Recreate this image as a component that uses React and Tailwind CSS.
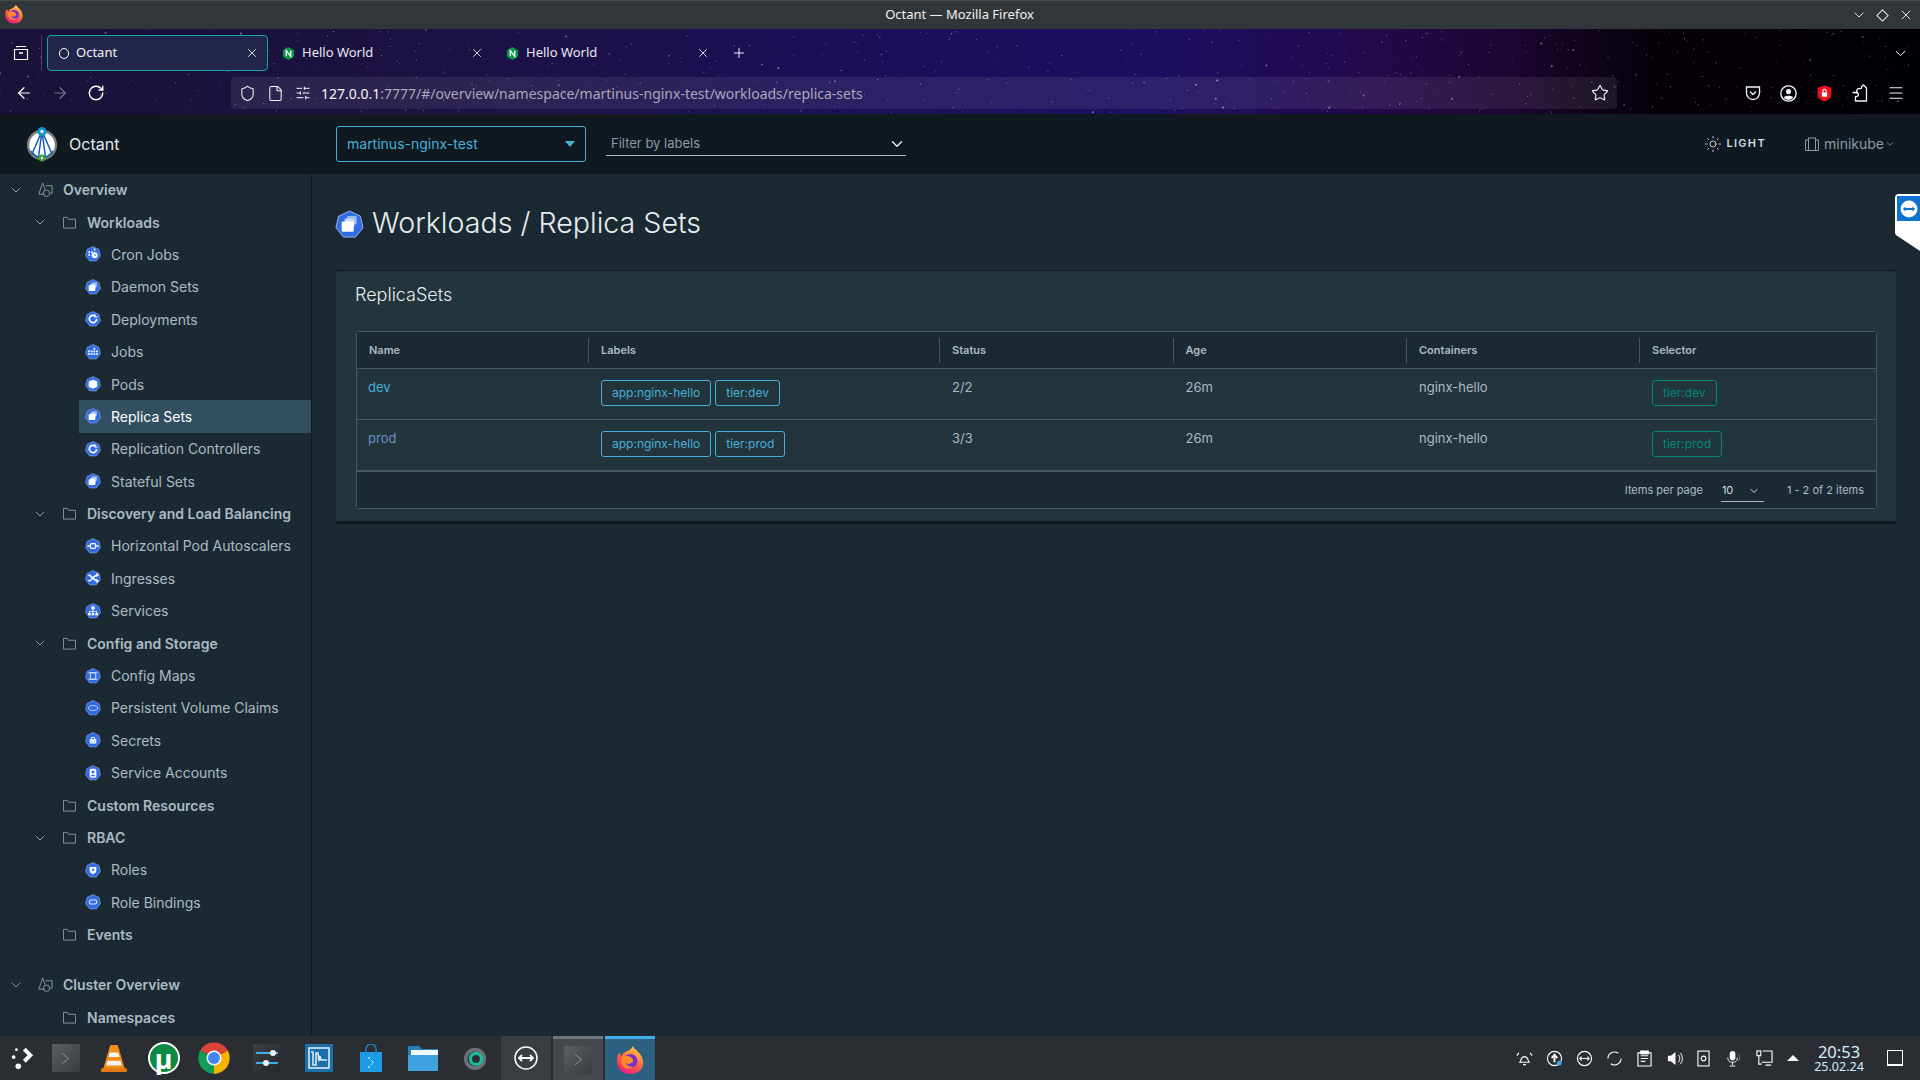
import React from "react";
import {
  ArrowLeft,
  ArrowRight,
  ChevronDown,
  File,
  Menu,
  Plus,
  RotateCw,
  Shield,
  SlidersHorizontal,
  Star,
  Sun,
  X,
} from "lucide-react";

const UI = "font-['Noto_Sans',sans-serif]";
const APP = "font-['Inter',sans-serif]";

// fixed star field for the firefox theme
const stars = [];
let seed = 7;
const rnd = () => {
  seed = (seed * 16807) % 2147483647;
  return seed / 2147483647;
};
for (let i = 0; i < 520; i++) {
  stars.push({ x: rnd() * 1920, y: rnd() * 85, r: rnd() < 0.1 ? 1 : 0.55, o: 0.15 + rnd() * 0.45 });
}

const Heptagon = ({ children, className = "w-4 h-4" }) => (
  <svg viewBox="0 0 24 24" className={className}>
    <path
      d="M12 .8 21 5.1 23.2 14.6 17 22.4H7L.8 14.6 3 5.1Z"
      fill="#326ce5"
      stroke="#9db8ef"
      strokeWidth="0.8"
      strokeLinejoin="round"
    />
    {children}
  </svg>
);

const glyphs = {
  cron: (
    <g fill="#fff">
      <circle cx="14.5" cy="14" r="4.5" />
      <rect x="5" y="8" width="2.6" height="2.6" />
      <rect x="5" y="12" width="2.6" height="2.6" />
      <rect x="9" y="8" width="2.6" height="2.6" />
      <rect x="13" y="4" width="2.6" height="2.6" />
      <path d="M14.5 11.5V14h2" stroke="#326ce5" strokeWidth="1.2" fill="none" />
    </g>
  ),
  set: (
    <g>
      <rect x="10" y="5" width="8" height="7" rx="1" fill="#9db8ef" />
      <rect x="8" y="7" width="8" height="7" rx="1" fill="#c8d8f7" />
      <rect x="5.5" y="9.5" width="10" height="8.5" rx="1" fill="#fff" />
    </g>
  ),
  deploy: (
    <g fill="none" stroke="#fff" strokeWidth="2.6">
      <path d="M17.5 12a5.5 5.5 0 1 1-2-4.3" />
      <path d="M15 5v4h4" strokeWidth="1.6" />
    </g>
  ),
  jobs: (
    <g fill="#fff">
      {[
        [14, 7],
        [6, 11],
        [10, 11],
        [14, 11],
        [18, 11],
        [6, 15],
        [10, 15],
        [14, 15],
        [18, 15],
      ].map(([x, y]) => (
        <rect key={`${x}-${y}`} x={x - 1.3} y={y - 1.3} width="2.6" height="2.6" />
      ))}
    </g>
  ),
  pod: <path d="M12 6 18 8.5V16L12 18.5 6 16V8.5Z" fill="#fff" stroke="#fff" strokeLinejoin="round" />,
  hpa: (
    <g fill="none" stroke="#fff" strokeWidth="2">
      <rect x="8" y="8.5" width="8" height="7" rx="2" />
      <path d="M3.5 12H7M17 12h3.5" />
    </g>
  ),
  ingress: (
    <g fill="none" stroke="#fff" strokeWidth="2.4">
      <path d="M5 7.5c6 0 7 9 14 9M5 16.5c6 0 7-9 14-9" />
      <path d="M17 5l3 2.5-3 2.5M17 14l3 2.5-3 2.5" strokeWidth="1.6" />
    </g>
  ),
  service: (
    <g fill="#fff">
      <rect x="9.5" y="5" width="5" height="4.5" />
      <rect x="4.5" y="15" width="4" height="3.5" />
      <rect x="10" y="15" width="4" height="3.5" />
      <rect x="15.5" y="15" width="4" height="3.5" />
      <path d="M11.4 9.5h1.2V12H18v3h-1.2v-1.8h-4.2V15h-1.2v-1.8H7.2V15H6v-3h5.4Z" />
    </g>
  ),
  config: (
    <g fill="none" stroke="#c8d8f7" strokeWidth="1.6">
      <rect x="8" y="7" width="8" height="10" />
      <path d="M5 7h14M5 17h14" />
    </g>
  ),
  pvc: <ellipse cx="12" cy="12" rx="7" ry="3.6" fill="none" stroke="#b8cdf5" strokeWidth="1.5" />,
  secret: (
    <g fill="#dbe6fb">
      <rect x="7" y="10.5" width="10" height="7" />
      <path d="M9 10.5V7.5h6v3h-1.5V9h-3v1.5Z" />
    </g>
  ),
  account: (
    <g fill="#fff">
      <rect x="7" y="5.5" width="10" height="13.5" rx="2.5" />
      <circle cx="12" cy="10.5" r="2.2" fill="#326ce5" />
      <path d="M8.6 17c.3-3 6.5-3 6.8 0Z" fill="#326ce5" />
    </g>
  ),
  role: (
    <g>
      <path d="M7 7.5h10v5c0 3-2.2 4.8-5 6-2.8-1.2-5-3-5-6Z" fill="#fff" />
      <circle cx="12" cy="11.5" r="1.8" fill="#326ce5" />
    </g>
  ),
  binding: <rect x="6.5" y="9" width="11" height="6" rx="2.5" fill="none" stroke="#dbe6fb" strokeWidth="1.7" />,
};

const FolderIcon = () => (
  <svg viewBox="0 0 14 14" className="w-[13px] h-[13px]" fill="none" stroke="#8a9aa5" strokeWidth="1">
    <path d="M.5 13V1.500h4.200l1.100 2h7.700V13Z" />
  </svg>
);

const ShapesIcon = () => (
  <svg viewBox="0 0 16 16" className="w-[15px] h-[15px]" fill="none" stroke="#8a9aa5" strokeWidth="1">
    <path d="M5 1 .8 13h6.400" />
    <path d="M5 1 7.500 8" />
    <path d="M8 4h7v8h-2" />
    <circle cx="9" cy="12" r="3.400" />
  </svg>
);

const sidebar = [
  { level: 0, label: "Overview", open: true },
  { level: 1, label: "Workloads", open: true },
  { level: 2, label: "Cron Jobs", glyph: "cron" },
  { level: 2, label: "Daemon Sets", glyph: "set" },
  { level: 2, label: "Deployments", glyph: "deploy" },
  { level: 2, label: "Jobs", glyph: "jobs" },
  { level: 2, label: "Pods", glyph: "pod" },
  { level: 2, label: "Replica Sets", glyph: "set", active: true },
  { level: 2, label: "Replication Controllers", glyph: "deploy" },
  { level: 2, label: "Stateful Sets", glyph: "set" },
  { level: 1, label: "Discovery and Load Balancing", open: true },
  { level: 2, label: "Horizontal Pod Autoscalers", glyph: "hpa" },
  { level: 2, label: "Ingresses", glyph: "ingress" },
  { level: 2, label: "Services", glyph: "service" },
  { level: 1, label: "Config and Storage", open: true },
  { level: 2, label: "Config Maps", glyph: "config" },
  { level: 2, label: "Persistent Volume Claims", glyph: "pvc" },
  { level: 2, label: "Secrets", glyph: "secret" },
  { level: 2, label: "Service Accounts", glyph: "account" },
  { level: 1, label: "Custom Resources" },
  { level: 1, label: "RBAC", open: true },
  { level: 2, label: "Roles", glyph: "role" },
  { level: 2, label: "Role Bindings", glyph: "binding" },
  { level: 1, label: "Events" },
  { level: 0, label: "Cluster Overview", open: true, spaced: true },
  { level: 1, label: "Namespaces" },
];

const SidebarRow = ({ item }) => {
  if (item.level === 2) {
    return (
      <div className={`h-[32.4px] ml-[79px] pl-[6px] flex items-center gap-[10px] ${item.active ? "bg-[#324f61] text-white" : "text-[#acbac3]"}`}>
        <Heptagon>{glyphs[item.glyph]}</Heptagon>
        <span>{item.label}</span>
      </div>
    );
  }
  const left = item.level === 0 ? "pl-[8px]" : "pl-[32px]";
  return (
    <div className={`h-[32.4px] ${left} ${item.spaced ? "mt-[17.6px]" : ""} flex items-center font-semibold text-[#acbac3]`}>
      <span className="w-[16px] mr-[12px] flex justify-center">
        {item.open && <ChevronDown size={18} strokeWidth={1.5} color="#8a9aa5" />}
      </span>
      <span className="w-[18px] mr-[9px] flex justify-center">
        {item.level === 0 ? <ShapesIcon /> : <FolderIcon />}
      </span>
      <span>{item.label}</span>
    </div>
  );
};

const Tag = ({ children, green }) => (
  <span className={`h-[26px] px-[10px] flex items-center rounded-[3px] border text-[12px] ${green ? "border-[#00897b] text-[#00897b]" : "border-[#49afd9] text-[#49afd9]"}`}>
    {children}
  </span>
);

const cols = ["w-[232px]", "w-[351px]", "w-[233.5px]", "w-[233.5px]", "w-[233px]", "flex-1"];
const headers = ["Name", "Labels", "Status", "Age", "Containers", "Selector"];
const rows = [
  { name: "dev", tier: "tier:dev", status: "2/2", color: "text-[#49afd9]" },
  { name: "prod", tier: "tier:prod", status: "3/3", color: "text-[#6b8fc9]" },
];

const TableRow = ({ row, last }) => (
  <div className={`flex text-[13px] text-[#acbac3] ${last ? "h-[52px] border-b-[2px] border-[#485764]" : "h-[51px] border-b border-[#485764]"}`}>
    <div className={`${cols[0]} pl-[11px] pt-[9px] ${row.color}`}>{row.name}</div>
    <div className={`${cols[1]} pl-[12px] pt-[11px] flex gap-[4px] items-start`}>
      <Tag>app:nginx-hello</Tag>
      <Tag>{row.tier}</Tag>
    </div>
    <div className={`${cols[2]} pl-[12px] pt-[9px]`}>{row.status}</div>
    <div className={`${cols[3]} pl-[12px] pt-[9px]`}>26m</div>
    <div className={`${cols[4]} pl-[12px] pt-[9px]`}>nginx-hello</div>
    <div className={`${cols[5]} pl-[12px] pt-[11px] flex items-start`}>
      <Tag green>{row.tier}</Tag>
    </div>
  </div>
);

const NginxIcon = () => (
  <svg viewBox="0 0 14 14" className="w-[13px] h-[13px]">
    <path d="M7 0 13 3.500v7L7 14 1 10.500v-7Z" fill="#0b9444" />
    <path d="M4.600 10V4l4.800 6V4" fill="none" stroke="#fff" strokeWidth="1.400" />
  </svg>
);

const FirefoxLogo = ({ className, id }) => (
  <svg viewBox="0 0 32 32" className={className}>
    <defs>
      <linearGradient id={id} x1="0.7" y1="0" x2="0.2" y2="1">
        <stop offset="0" stopColor="#ffd23f" />
        <stop offset="0.45" stopColor="#ff7139" />
        <stop offset="1" stopColor="#e31587" />
      </linearGradient>
    </defs>
    <path d="M19 1c1 3 5 5 8 9 4 6 4 12 0 17-3 3-7 4-11 4C8 31 2 25 2 17c0-4 1-7 3-9 0 2 1 3 2 4 1-3 3-4 5-5 3-1 6-3 7-6Z" fill={`url(#${id})`} />
    <circle cx="16.500" cy="17" r="7.500" fill="#7a2fd0" />
    <path d="M8 13c3-2 7-1 9 0 3 2 3 5 1 6-3 2-6 1-7 0 1 3 5 5 9 4-3 3-9 3-12-1-2-3-2-6 0-9Z" fill="#ff8a2a" />
  </svg>
);

const TaskIcon = ({ children, className = "w-[42.5px]" }) => (
  <div className={`h-full flex items-center justify-center shrink-0 ${className}`}>{children}</div>
);

const TerminalIcon = () => (
  <div className="w-[28px] h-[28px] bg-gradient-to-br from-[#5a6063] to-[#383c3f] flex items-center justify-center">
    <svg viewBox="0 0 12 16" className="w-[9px] h-[15px]" fill="none" stroke="#959b9f" strokeWidth="1.200">
      <path d="M1.500 1 10 8l-8.500 7" />
    </svg>
  </div>
);

const App = () => {
  return (
    <div className={`w-[1920px] h-[1080px] overflow-hidden flex flex-col bg-[#1b2a32] ${APP}`}>
      {/* window title bar */}
      <div className={`h-[29px] shrink-0 bg-[#31363b] border-t border-[#44494d] flex items-center text-[13px] text-[#eff0f1] ${UI}`}>
        <FirefoxLogo id="ffa" className="w-[20px] h-[20px] ml-[4px] -mt-[2px]" />
        <div className="flex-1 text-center pl-[44px]">Octant — Mozilla Firefox</div>
        <div className="flex items-center gap-[9px] pr-[6px]">
          <ChevronDown size={16} strokeWidth={1.400} />
          <svg viewBox="0 0 14 14" className="w-[13px] h-[13px]" fill="none" stroke="#eff0f1" strokeWidth="1.100">
            <path d="M7 1 13 7 7 13 1 7Z" />
          </svg>
          <X size={16} strokeWidth={1.400} />
        </div>
      </div>

      {/* firefox chrome with the galaxy theme */}
      <div className={`h-[85px] shrink-0 relative flex flex-col bg-[linear-gradient(90deg,#1a1238_0%,#1c1145_25%,#1b0f58_45%,#1c0e60_60%,#22094a_72%,#1a0630_79%,#060109_86%,#020004_100%)] text-white ${UI}`}>
        <svg className="absolute inset-0 w-full h-full" viewBox="0 0 1920 85">
          {stars.map((s, i) => (
            <circle key={i} cx={s.x} cy={s.y} r={s.r} fill="#d8d4ee" opacity={s.o} />
          ))}
        </svg>
        <div className="relative h-[44px] flex items-center text-[13px] pt-[4px]">
          <div className="w-[42px] h-[36px] border-r border-[#ffffff33] flex items-center justify-center">
            <svg viewBox="0 0 16 16" className="w-[16px] h-[16px]" fill="none" stroke="#f4f4f6" strokeWidth="1.200">
              <path d="M3 1.500h10M1.500 4.500h13v10h-13Z" />
              <path d="M6 8h4" strokeWidth="1.600" />
            </svg>
          </div>
          <div className="w-[221px] h-[36px] ml-[5px] pl-[11px] pr-[8px] flex items-center rounded-[4px] border border-[#14a3a8] bg-[#22264a]">
            <span className="w-[10px] h-[11px] rounded-full border border-white mr-[7px]" />
            <span className="flex-1 text-[#f4f4f6]">Octant</span>
            <X size={14} strokeWidth={1.400} />
          </div>
          <div className="w-[225px] h-[36px] pl-[14px] pr-[9px] flex items-center gap-[7px]">
            <NginxIcon />
            <span className="flex-1 text-[#e8e8ee]">Hello World</span>
            <X size={14} strokeWidth={1.400} />
          </div>
          <div className="w-[225px] h-[36px] pl-[13px] pr-[8px] flex items-center gap-[7px]">
            <NginxIcon />
            <span className="flex-1 text-[#e8e8ee]">Hello World</span>
            <X size={14} strokeWidth={1.400} />
          </div>
          <Plus size={16} strokeWidth={1.400} className="ml-[13px]" />
          <div className="flex-1 flex justify-end pr-[11px]">
            <ChevronDown size={17} strokeWidth={1.400} />
          </div>
        </div>
        <div className="relative h-[41px] flex items-start">
          <div className="w-[231px] h-[32px] mt-[4px] flex items-center pl-[15px] gap-[18px]">
            <ArrowLeft size={18} strokeWidth={1.600} />
            <ArrowRight size={18} strokeWidth={1.600} className="opacity-40" />
            <RotateCw size={18} strokeWidth={1.800} />
          </div>
          <div className="w-[1386px] h-[32px] mt-[4px] rounded-[4px] bg-[#ffffff14] flex items-center pl-[8px] pr-[8px] text-[14px] text-[#a9a8b8]">
            <Shield size={17} strokeWidth={1.500} color="#f4f4f6" />
            <File size={17} strokeWidth={1.500} color="#f4f4f6" className="ml-[11px]" />
            <SlidersHorizontal size={16} strokeWidth={1.500} color="#f4f4f6" className="ml-[11px] mr-[10px]" />
            <span className="flex-1">
              <span className="text-[#f4f4f6]">127.0.0.1</span>:7777/#/overview/namespace/martinus-nginx-test/workloads/replica-sets
            </span>
            <Star size={18} strokeWidth={1.500} color="#f4f4f6" />
          </div>
          <div className="flex-1 h-[32px] mt-[4px] flex items-center justify-end pr-[15px] gap-[19px]">
            <svg viewBox="0 0 16 16" className="w-[16px] h-[16px]" fill="none" stroke="#f4f4f6" strokeWidth="1.300">
              <path d="M1.500 2h13v6a6.500 6.500 0 0 1-13 0Z" />
              <path d="M5 6.500 8 9.500 11 6.500" />
            </svg>
            <svg viewBox="0 0 16 16" className="w-[17px] h-[17px]">
              <circle cx="8" cy="8" r="7.200" fill="none" stroke="#f4f4f6" strokeWidth="1.300" />
              <circle cx="8" cy="6.200" r="2.400" fill="#f4f4f6" />
              <path d="M3.500 12c1-2.500 8-2.500 9 0a6 6 0 0 1-9 0Z" fill="#f4f4f6" />
            </svg>
            <svg viewBox="0 0 16 16" className="w-[17px] h-[17px]">
              <path d="M8 .5 14.500 2.500V9c0 3-3 5.500-6.500 6.500C4.500 14.500 1.500 12 1.500 9V2.500Z" fill="#ee0f1e" />
              <rect x="5.500" y="7" width="5" height="4" fill="#fff" />
              <path d="M6.500 7V5.500a1.500 1.500 0 0 1 3 0V7" fill="none" stroke="#fff" />
            </svg>
            <svg viewBox="0 0 16 18" className="w-[16px] h-[18px]" fill="none" stroke="#f4f4f6" strokeWidth="1.300">
              <path d="M1 8.500h4.500c-2-2 0-4 1.500-4s3 .5 2.500-1.500L11.500 1l3 3v13H3.500v-4.500c2 .5 3-1 3-2s-2-2-5.500-2Z" strokeLinejoin="round" />
            </svg>
            <Menu size={18} strokeWidth={1.500} color="#f4f4f6" />
          </div>
        </div>
      </div>

      {/* octant header */}
      <div className="h-[60px] shrink-0 bg-[#10191f] flex items-center">
        <div className="w-[336px] flex items-center pl-[27px]">
          <svg viewBox="0 0 30 36" className="w-[30px] h-[36px]">
            <circle cx="15" cy="19" r="14" fill="#fff" stroke="#7d7d7d" strokeWidth="2.400" />
            <path d="M15 5 5 28M15 5l-3.500 26M15 5l3.500 26M15 5l10 23M3.500 25C8 30 11 32 15 32s7-2 11.500-7" fill="none" stroke="#0f5cad" strokeWidth="1.500" />
            <circle cx="15" cy="5.500" r="4.500" fill="#0e93d6" />
            <circle cx="15" cy="5.500" r="1.700" fill="#fff" />
            <circle cx="15" cy="32" r="3.400" fill="#3fa535" />
            <circle cx="15" cy="32" r="1.200" fill="#dff0d8" />
          </svg>
          <span className="ml-[12px] text-[16px] text-[#e3eaed]">Octant</span>
        </div>
        <div className="w-[250px] h-[36px] rounded-[3px] border border-[#49afd9] flex items-center pl-[10px] pr-[10px] pb-[1px] text-[14px] text-[#49afd9]">
          <span className="flex-1">martinus-nginx-test</span>
          <span className="w-0 h-0 border-x-[5px] border-x-transparent border-t-[6px] border-t-[#49afd9]" />
        </div>
        <div className="w-[300px] h-[24px] ml-[20px] border-b border-[#acbac3] flex items-center pl-[5px] pr-0 text-[13px] text-[#8b99a3]">
          <span className="flex-1">Filter by labels</span>
          <ChevronDown size={18} color="#e3eaed" />
        </div>
        <div className="flex-1 flex items-center justify-end pr-[25px] pb-[1px]">
          <Sun size={18} strokeWidth={1.300} color="#c5d0d6" />
          <span className="ml-[4px] text-[11px] font-semibold tracking-[0.12em] text-[#d5dde1]">LIGHT</span>
          <svg viewBox="0 0 14 14" className="w-[14px] h-[14px] ml-[39px]" fill="none" stroke="#8a9aa5" strokeWidth="1">
            <path d="M.5 3h3M10.500 3h3V13.500H.5V3" />
            <rect x="3.500" y="1" width="7" height="12.500" />
          </svg>
          <span className="ml-[5px] text-[14px] text-[#8a9aa5]">minikube</span>
          <ChevronDown size={10} color="#8a9aa5" className="ml-[1px]" />
        </div>
      </div>

      <div className="flex-1 min-h-0 flex relative">
        {/* sidebar */}
        <div className={`w-[312px] shrink-0 border-r border-[#10191f] text-[14px] overflow-hidden ${APP}`}>
          <div className="-mt-[0.5px]">
            {sidebar.map((item) => (
              <SidebarRow key={item.label} item={item} />
            ))}
          </div>
        </div>

        {/* page */}
        <div className="flex-1 pl-[24px] pr-[24px] pt-[31px]">
          <div className="flex items-center h-[36px] -ml-[1px]">
            <Heptagon className="w-[29px] h-[29px] mt-[3px]">{glyphs.set}</Heptagon>
            <h1 className="ml-[8px] text-[28.600px] font-light text-[#e9ecef]">Workloads / Replica Sets</h1>
          </div>

          <div className="mt-[29px] h-[254px] rounded-[3px] bg-[#22343c] border-t border-[#0f181d] border-b-[3px] border-b-[#0f181d] pl-[20px] pr-[19px] pt-[12px]">
            <h2 className="-ml-[1px] text-[18px] font-light leading-[24px] text-[#e9ecef]">ReplicaSets</h2>
            <div className="mt-[24px] h-[178px] rounded-[3px] border border-[#485764]">
              <div className="h-[37px] bg-[#1b2a32] border-b border-[#485764] flex items-center text-[11px] font-semibold text-[#acbac3]">
                {headers.map((h, i) => (
                  <div key={h} className={`${cols[i]} h-[25px] pl-[12px] flex items-center ${i < 5 ? "border-r border-[#485764]" : ""}`}>
                    {h}
                  </div>
                ))}
              </div>
              {rows.map((row, i) => (
                <TableRow key={row.name} row={row} last={i === 1} />
              ))}
              <div className="h-[36px] bg-[#1b2a32] flex items-center justify-end pr-[12px] text-[11px] text-[#acbac3]">
                <span>Items per page</span>
                <div className="w-[43px] h-[24px] ml-[18px] border-b border-[#acbac3] flex items-center pl-[1px] pt-[2px] text-[#d5dde1]">
                  <span className="flex-1">10</span>
                  <ChevronDown size={12} className="mr-[4px]" />
                </div>
                <span className="ml-[23px]">1 - 2 of 2 items</span>
              </div>
            </div>
          </div>
        </div>

        {/* teamviewer side tab */}
        <div className="absolute right-0 top-[20px] w-[25px]">
          <div className="w-[25px] h-[35px] bg-white rounded-tl-[4px] pl-[2px] pt-[2px]">
            <div className="w-[23px] h-[25px] bg-[#0e72cf] flex items-center justify-center">
              <svg viewBox="0 0 16 16" className="w-[18px] h-[18px]">
                <circle cx="8" cy="8" r="7.500" fill="#fff" />
                <path d="M2.500 8 5 5.800V7.200h6V5.800L13.500 8 11 10.200V8.800H5v1.400Z" fill="#0e72cf" />
              </svg>
            </div>
          </div>
          <svg viewBox="0 0 25 22" className="w-[25px] h-[22px] block" preserveAspectRatio="none">
            <path d="M0 0H25V22L4 8Q0 6 0 4Z" fill="#fff" />
          </svg>
        </div>
      </div>

      {/* plasma panel */}
      <div className={`h-[44px] shrink-0 bg-[#2a2e32] flex items-center ${UI}`}>
        <TaskIcon className="w-[44px]">
          <svg viewBox="0 0 28 28" className="w-[26px] h-[26px]" fill="#fcfcfc">
            <path d="M15 6l3-3 8 8-8 8-3-3 5-5Z" />
            <circle cx="5" cy="13" r="2" />
            <circle cx="8" cy="5" r="1.500" />
            <circle cx="10" cy="23" r="3" />
          </svg>
        </TaskIcon>
        <TaskIcon className="w-[43.5px]">
          <TerminalIcon />
        </TaskIcon>
        <TaskIcon className="w-[52px]">
          <svg viewBox="0 0 28 32" className="w-[26px] h-[30px]">
            <path d="M10 2h8l8 27H2Z" fill="#f28c18" />
            <path d="M9.500 10h9l1.500 5H8ZM7 19h14l1.500 5h-17Z" fill="#f5f5f5" />
            <rect x="0" y="27" width="28" height="4" rx="1" fill="#e57a10" />
          </svg>
        </TaskIcon>
        <TaskIcon className="w-[48px]">
          <div className="w-[32px] h-[32px] rounded-full bg-[#0b8a44] border-[2px] border-white flex items-center justify-center text-[27px] font-bold text-white leading-none">
            µ
          </div>
        </TaskIcon>
        <TaskIcon className="w-[53px]">
          <svg viewBox="0 0 32 32" className="w-[32px] h-[32px]">
            <path d="M16 16 2.100 8.500A16 16 0 0 1 29.900 8.500Z" fill="#db4437" />
            <path d="M16 16 29.900 8.500A16 16 0 0 1 16 32Z" fill="#f4b400" />
            <path d="M16 16 16 32A16 16 0 0 1 2.100 8.500Z" fill="#0f9d58" />
            <circle cx="16" cy="16" r="7.500" fill="#fff" />
            <circle cx="16" cy="16" r="6" fill="#4285f4" />
          </svg>
        </TaskIcon>
        <TaskIcon className="w-[52px]">
          <div className="w-[28px] h-[28px] bg-gradient-to-br from-[#3b4045] to-[#25282b] flex flex-col justify-center gap-[8px] px-[3px]">
            <div className="h-[2px] bg-[#3daee9] relative">
              <span className="absolute right-[2px] -top-[2px] w-[6px] h-[6px] rounded-full bg-[#eff0f1]" />
            </div>
            <div className="h-[2px] bg-[#3daee9] relative">
              <span className="absolute left-[7px] -top-[2px] w-[6px] h-[6px] rounded-full bg-[#eff0f1]" />
            </div>
          </div>
        </TaskIcon>
        <TaskIcon className="w-[52px]">
          <div className="w-[28px] h-[28px] bg-[#1d6fa8] p-[3px]">
            <svg viewBox="0 0 22 22" className="w-[22px] h-[22px]" fill="none" stroke="#d8eaf5" strokeWidth="1.600">
              <rect x="1" y="1" width="20" height="20" />
              <path d="M3 5h2v13h3V6h2l1 8 1-5 1 4h6" />
            </svg>
          </div>
        </TaskIcon>
        <TaskIcon className="w-[52px]">
          <svg viewBox="0 0 24 28" className="w-[24px] h-[28px]">
            <path d="M1 8h22v20H1Z" fill="#1c9be6" />
            <path d="M7 10V5a5 5 0 0 1 10 0v5" fill="none" stroke="#1c83c4" strokeWidth="1.500" />
            <circle cx="10" cy="14" r="1" fill="#bfe4fa" />
            <path d="M12 16l2.500 2.500L12 21" fill="none" stroke="#bfe4fa" />
            <circle cx="10" cy="23" r="1" fill="#bfe4fa" />
          </svg>
        </TaskIcon>
        <TaskIcon className="w-[52px]">
          <svg viewBox="0 0 30 26" className="w-[30px] h-[26px]">
            <path d="M0 2a1 1 0 0 1 1-1h10l3 3h16v22H0Z" fill="#2980b9" />
            <rect x="3" y="5" width="27" height="6" fill="#f5f7f8" />
            <path d="M0 10h30v16H0Z" fill="#3da2dd" />
          </svg>
        </TaskIcon>
        <TaskIcon className="w-[52.5px]">
          <svg viewBox="0 0 26 26" className="w-[24px] h-[24px]">
            <circle cx="13" cy="14" r="10" fill="none" stroke="#6a7075" strokeWidth="4" />
            <circle cx="14" cy="14" r="6" fill="none" stroke="#1abc9c" strokeWidth="3.500" />
          </svg>
        </TaskIcon>
        <div className="w-[50px] h-full bg-[#3a3e42] flex items-center justify-center shrink-0">
          <svg viewBox="0 0 24 24" className="w-[24px] h-[24px]" fill="none" stroke="#fcfcfc" strokeWidth="1.500">
            <circle cx="12" cy="12" r="11" />
            <path d="M5 12h14M8 9l-3 3 3 3M16 9l3 3-3 3" strokeWidth="1.800" />
          </svg>
        </div>
        <div className="w-[50px] h-full ml-[2px] bg-[#44484c] border-t-[3px] border-[#70757a] flex items-center justify-center shrink-0">
          <TerminalIcon />
        </div>
        <div className="w-[50px] h-full ml-[2px] bg-[#2d5f7f] border-t-[3px] border-[#3daee9] flex items-center justify-center shrink-0">
          <FirefoxLogo id="ffb" className="w-[30px] h-[30px]" />
        </div>

        <div className="flex-1 flex items-center justify-end text-[#fcfcfc]">
          <svg viewBox="0 0 18 18" className="w-[17px] h-[17px] mr-[13px]" fill="none" stroke="#fcfcfc" strokeWidth="1.200">
            <path d="M4 13c1.500-1.500 1-6 5-6s3.500 4.500 5 6ZM7.500 15.500h3M3 3 1 6M15 3l2 3" />
          </svg>
          <svg viewBox="0 0 18 18" className="w-[17px] h-[17px] mr-[13px]" fill="none" stroke="#fcfcfc" strokeWidth="1.200">
            <circle cx="9" cy="9" r="7.500" />
            <path d="M9 13V6M6 8.500 9 5l3 3.500" strokeWidth="2" />
            <circle cx="14" cy="14" r="2.500" fill="#3daee9" stroke="none" />
          </svg>
          <svg viewBox="0 0 18 18" className="w-[17px] h-[17px] mr-[13px]" fill="none" stroke="#fcfcfc" strokeWidth="1.200">
            <circle cx="9" cy="9" r="7.500" />
            <path d="M4 9h10M6 7 4 9l2 2M12 7l2 2-2 2" />
          </svg>
          <svg viewBox="0 0 18 18" className="w-[17px] h-[17px] mr-[14px]" fill="none" stroke="#fcfcfc" strokeWidth="1.200">
            <path d="M2 9a7 7 0 0 1 11-5.500M16 9a7 7 0 0 1-11 5.500" />
          </svg>
          <svg viewBox="0 0 16 18" className="w-[15px] h-[17px] mr-[15px]" fill="none" stroke="#fcfcfc" strokeWidth="1.200">
            <path d="M1 3h14v14H1ZM4 6h8M4 9h8M4 12h5" />
            <rect x="4" y="1" width="8" height="3" fill="#fcfcfc" />
          </svg>
          <svg viewBox="0 0 18 18" className="w-[17px] h-[17px] mr-[13px]" fill="#fcfcfc">
            <path d="M1 6h3l5-4v14l-5-4H1Z" />
            <path d="M12 5c2 2 2 6 0 8M14 3c3 3 3 9 0 12" fill="none" stroke="#fcfcfc" />
          </svg>
          <svg viewBox="0 0 14 18" className="w-[13px] h-[17px] mr-[15px]" fill="none" stroke="#fcfcfc" strokeWidth="1.200">
            <rect x="1" y="1" width="12" height="16" />
            <circle cx="7" cy="9" r="2.500" />
          </svg>
          <svg viewBox="0 0 18 18" className="w-[17px] h-[17px] mr-[14px]" fill="#fcfcfc">
            <rect x="5" y="1" width="6" height="10" rx="3" />
            <path d="M3 8c0 4 2 5 5 5s5-1 5-5M8 13v3M5 17h6" fill="none" stroke="#fcfcfc" />
            <path d="M14 4c2 2 2 6 0 8" fill="none" stroke="#7c8186" />
          </svg>
          <svg viewBox="0 0 18 18" className="w-[17px] h-[17px] mr-[14px]" fill="none" stroke="#fcfcfc" strokeWidth="1.200">
            <rect x="1" y="1" width="4" height="5" />
            <path d="M3 6v9h3M7 1h10v12H6M10 16h6" />
          </svg>
          <span className="w-0 h-0 border-x-[6px] border-x-transparent border-b-[6px] border-b-[#fcfcfc] mr-[14px]" />
          <div className="flex flex-col items-center gap-[1px] w-[52px] mr-[22px] text-[#d8ecf7]">
            <span className="text-[16.500px] leading-[15px]">20:53</span>
            <span className="text-[12.500px] leading-[13px]">25.02.24</span>
          </div>
          <div className="w-[16px] h-[16px] border border-[#fcfcfc] border-b-[2px] mr-[17px]" />
        </div>
      </div>
    </div>
  );
};

export default App;
